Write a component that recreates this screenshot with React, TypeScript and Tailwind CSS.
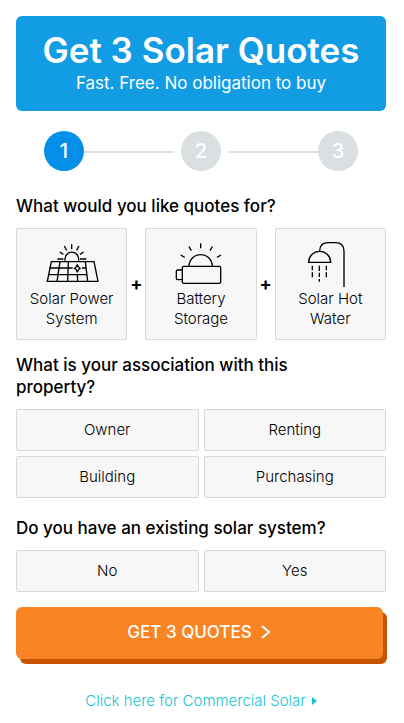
import { useState } from "react";

const products = [
  { id: "solar", label: "Solar Power System", icon: <SolarPanelIcon /> },
  { id: "battery", label: "Battery Storage", icon: <BatteryIcon /> },
  { id: "hot-water", label: "Solar Hot Water", icon: <ShowerIcon /> },
];

const associations = ["Owner", "Renting", "Building", "Purchasing"];

function SolarPanelIcon() {
  return (
    <svg
      viewBox="103 54 162 141"
      className="w-[54px] h-[47px]"
      fill="none"
      stroke="black"
      strokeWidth="4"
      aria-hidden="true"
    >
      <path d="M122 119H250L262 178H110Z" />
      <path d="M116 138H186M214 138H226M113 158H229" />
      <path d="M148 119L139 178M173 119L171 178M224 119L231 178M200 158L201 178" />
      <path d="M200 127Q202 136 208 139Q202 142 200 151Q198 142 192 139Q198 136 200 127Z" />
      <path d="M163 116V111A20 20 0 0 1 204 111V116" />
      <path d="M183 67V82M161 72L168 85M205 72L198 85M147 90L158 97M219 90L208 97M140 111H158M208 111H227" />
    </svg>
  );
}

function BatteryIcon() {
  return (
    <svg
      viewBox="103 54 162 141"
      className="w-[54px] h-[47px]"
      fill="none"
      stroke="black"
      strokeWidth="4"
      aria-hidden="true"
    >
      <rect x="128" y="133" width="115" height="51" rx="4" />
      <path d="M128 144H114Q110 144 110 148V169Q110 173 114 173H128" />
      <path d="M148 133A35 35 0 0 1 218 133" />
      <path d="M183 64V79M148 74L155 86M218 74L211 86M123 99L135 106M244 99L232 106" />
    </svg>
  );
}

function ShowerIcon() {
  return (
    <svg
      viewBox="130 54 162 141"
      className="w-[54px] h-[47px]"
      fill="none"
      stroke="black"
      strokeWidth="4"
      aria-hidden="true"
    >
      <path d="M147 121A33 33 0 0 1 213 121Z" />
      <path d="M180 88Q180 62 206 62H227Q253 62 253 88V195" />
      <path d="M158 131V145M158 151V166M200 131V145M200 151V166M179 131V147M179 152V165M179 171V179" />
    </svg>
  );
}

function Step({ number, active }: { number: number; active?: boolean }) {
  return (
    <span
      className={`w-10 h-10 shrink-0 rounded-full flex items-center justify-center text-xl font-medium text-white ${
        active ? "bg-[#058fe8]" : "bg-[#dadfe1]"
      }`}
    >
      {number}
    </span>
  );
}

function Choice({
  label,
  selected,
  onClick,
}: {
  label: string;
  selected: boolean;
  onClick: () => void;
}) {
  return (
    <button
      type="button"
      aria-pressed={selected}
      onClick={onClick}
      className={`h-[42px] rounded-xs border text-[15px] font-light ${
        selected ? "border-[#058fe8] bg-[#e6f4fd]" : "border-[#d8d8d8] bg-[#f7f7f7]"
      }`}
    >
      {label}
    </button>
  );
}

export default function App() {
  const [wanted, setWanted] = useState<string[]>([]);
  const [association, setAssociation] = useState("");
  const [existing, setExisting] = useState("");

  const toggleProduct = (id: string) => {
    setWanted((prev) =>
      prev.includes(id) ? prev.filter((p) => p !== id) : [...prev, id]
    );
  };

  return (
    <main className="bg-white pt-4 pb-3 pl-4 pr-[18px] font-['Inter',sans-serif] text-black">
      <header className="rounded-md bg-[#129ce4] pt-3 pb-[17px] text-center text-white">
        <h1 className="text-[35px] leading-[44px] font-semibold">
          Get 3 Solar Quotes
        </h1>
        <p className="text-[17px] leading-[22px] font-normal">
          Fast. Free. No obligation to buy
        </p>
      </header>

      <div className="mt-5 px-7 flex items-center">
        <Step number={1} active />
        <span className="mt-0.5 h-0.5 flex-1 bg-[#dadfe1]"></span>
        <span className="mx-2 flex">
          <Step number={2} />
        </span>
        <span className="mt-0.5 h-0.5 flex-1 bg-[#dadfe1]"></span>
        <Step number={3} />
      </div>

      <form onSubmit={(e) => e.preventDefault()}>
        <h2 className="mt-6 text-[17px] leading-[22px] font-medium">
          What would you like quotes for?
        </h2>
        <div className="mt-[11px] flex items-center">
          {products.map((product, index) => (
            <div key={product.id} className="contents">
              {index > 0 && (
                <span className="w-[18px] shrink-0 flex justify-center text-lg font-bold">
                  +
                </span>
              )}
              <button
                type="button"
                aria-pressed={wanted.includes(product.id)}
                onClick={() => toggleProduct(product.id)}
                className={`flex-1 basis-0 min-w-0 h-28 px-2 pt-[11px] flex flex-col items-center gap-0.5 rounded-xs border text-[15px] leading-5 font-light ${
                  wanted.includes(product.id)
                    ? "border-[#058fe8] bg-[#e6f4fd]"
                    : "border-[#d8d8d8] bg-[#f7f7f7]"
                }`}
              >
                {product.icon}
                <span>{product.label}</span>
              </button>
            </div>
          ))}
        </div>

        <h2 className="mt-[14px] pr-12 text-[17px] leading-[22px] font-medium">
          What is your association with this property?
        </h2>
        <div className="mt-[11px] grid grid-cols-2 gap-[5px]">
          {associations.map((label) => (
            <Choice
              key={label}
              label={label}
              selected={association === label}
              onClick={() => setAssociation(label)}
            />
          ))}
        </div>

        <h2 className="mt-[19px] text-[17px] leading-[22px] font-medium">
          Do you have an existing solar system?
        </h2>
        <div className="mt-[11px] grid grid-cols-2 gap-[5px]">
          {["No", "Yes"].map((label) => (
            <Choice
              key={label}
              label={label}
              selected={existing === label}
              onClick={() => setExisting(label)}
            />
          ))}
        </div>

        <div className="mt-[15px] pr-[3px]">
          <button
            type="submit"
            className="w-full h-[52px] flex items-center justify-center gap-2 rounded-md bg-[#f88424] text-[17px] font-medium text-white shadow-[4px_5px_0_#c75400]"
          >
            GET 3 QUOTES
            <svg
              viewBox="0 0 12 16"
              className="w-3 h-4"
              fill="none"
              stroke="currentColor"
              strokeWidth="2"
              aria-hidden="true"
            >
              <path d="M2 1L9 7L2 13" />
            </svg>
          </button>
        </div>
      </form>

      <div className="mt-8 flex justify-center">
        <a
          href="#commercial"
          className="flex items-center gap-[6px] text-[15px] leading-5 font-light text-[#14c4d2]"
        >
          Click here for Commercial Solar
          <svg viewBox="0 0 5 8" className="w-[5px] h-2" fill="currentColor" aria-hidden="true">
            <path d="M0 0L5 4L0 8Z" />
          </svg>
        </a>
      </div>
    </main>
  );
}
